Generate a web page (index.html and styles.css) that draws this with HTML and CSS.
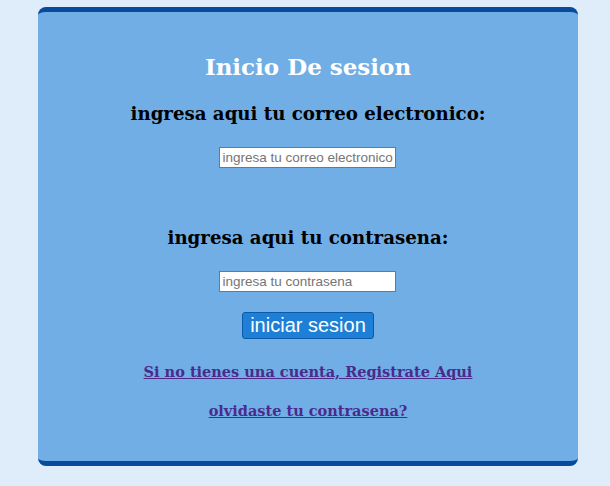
FILE: index.html
```html
<!DOCTYPE html>
<html lang="es">
<head>
<meta charset="utf-8">
<title>Inicio De sesion</title>
<link rel="stylesheet" href="styles.css">
</head>
<body>
<main class="card">
  <h1 class="title">Inicio De sesion</h1>
  <form class="form">
    <label class="label" for="email">ingresa aqui tu correo electronico:</label>
    <input class="field" id="email" type="text" placeholder="ingresa tu correo electronico">
    <label class="label label-second" for="pass">ingresa aqui tu contrasena:</label>
    <input class="field" id="pass" type="password" placeholder="ingresa tu contrasena">
    <button class="submit" type="button">iniciar sesion</button>
  </form>
  <a class="link link-first" href="#">Si no tienes una cuenta, Registrate Aqui</a>
  <a class="link" href="#">olvidaste tu contrasena?</a>
</main>
</body>
</html>
```
FILE: styles.css
```css
html, body {
  margin: 0;
  padding: 0;
  background: #dfecf9;
}
body {
  padding: 7px 0 0 38px;
  font-family: "DejaVu Serif", Georgia, serif;
}
.card {
  box-sizing: border-box;
  width: 540px;
  height: 459px;
  background: #71aee5;
  border-top: 5px solid #0a4a9d;
  border-bottom: 5px solid #0a4a9d;
  border-radius: 8px;
  display: flex;
  flex-direction: column;
  align-items: center;
  padding-top: 38px;
}
.title {
  margin: 0;
  color: #ffffff;
  font-size: 23px;
  line-height: 34px;
  font-weight: bold;
}
.form {
  display: flex;
  flex-direction: column;
  align-items: center;
}
.label {
  margin-top: 18px;
  font-size: 18.2px;
  line-height: 24px;
  font-weight: bold;
  color: #000;
}
.label-second {
  margin-top: 58px;
}
.field {
  box-sizing: border-box;
  width: 177px;
  height: 21px;
  margin-top: 21px;
  padding: 1px 2px;
  border: 1px solid #767676;
  background: #fff;
  font-family: "Liberation Sans", Arial, sans-serif;
  font-size: 13.5px;
}
.field::placeholder {
  color: #757575;
}
.submit {
  box-sizing: border-box;
  margin-top: 20px;
  width: 132px;
  height: 27px;
  padding: 0;
  background: #1e7fd6;
  color: #fff;
  border: 1px solid #0c5aa6;
  border-radius: 3px;
  font-family: "Liberation Sans", Arial, sans-serif;
  font-size: 20px;
  line-height: 25px;
}
.link {
  margin-top: 21px;
  color: #4b2a8c;
  font-size: 14.5px;
  line-height: 18px;
  font-weight: bold;
}
.link-first {
  margin-top: 24px;
}
```
